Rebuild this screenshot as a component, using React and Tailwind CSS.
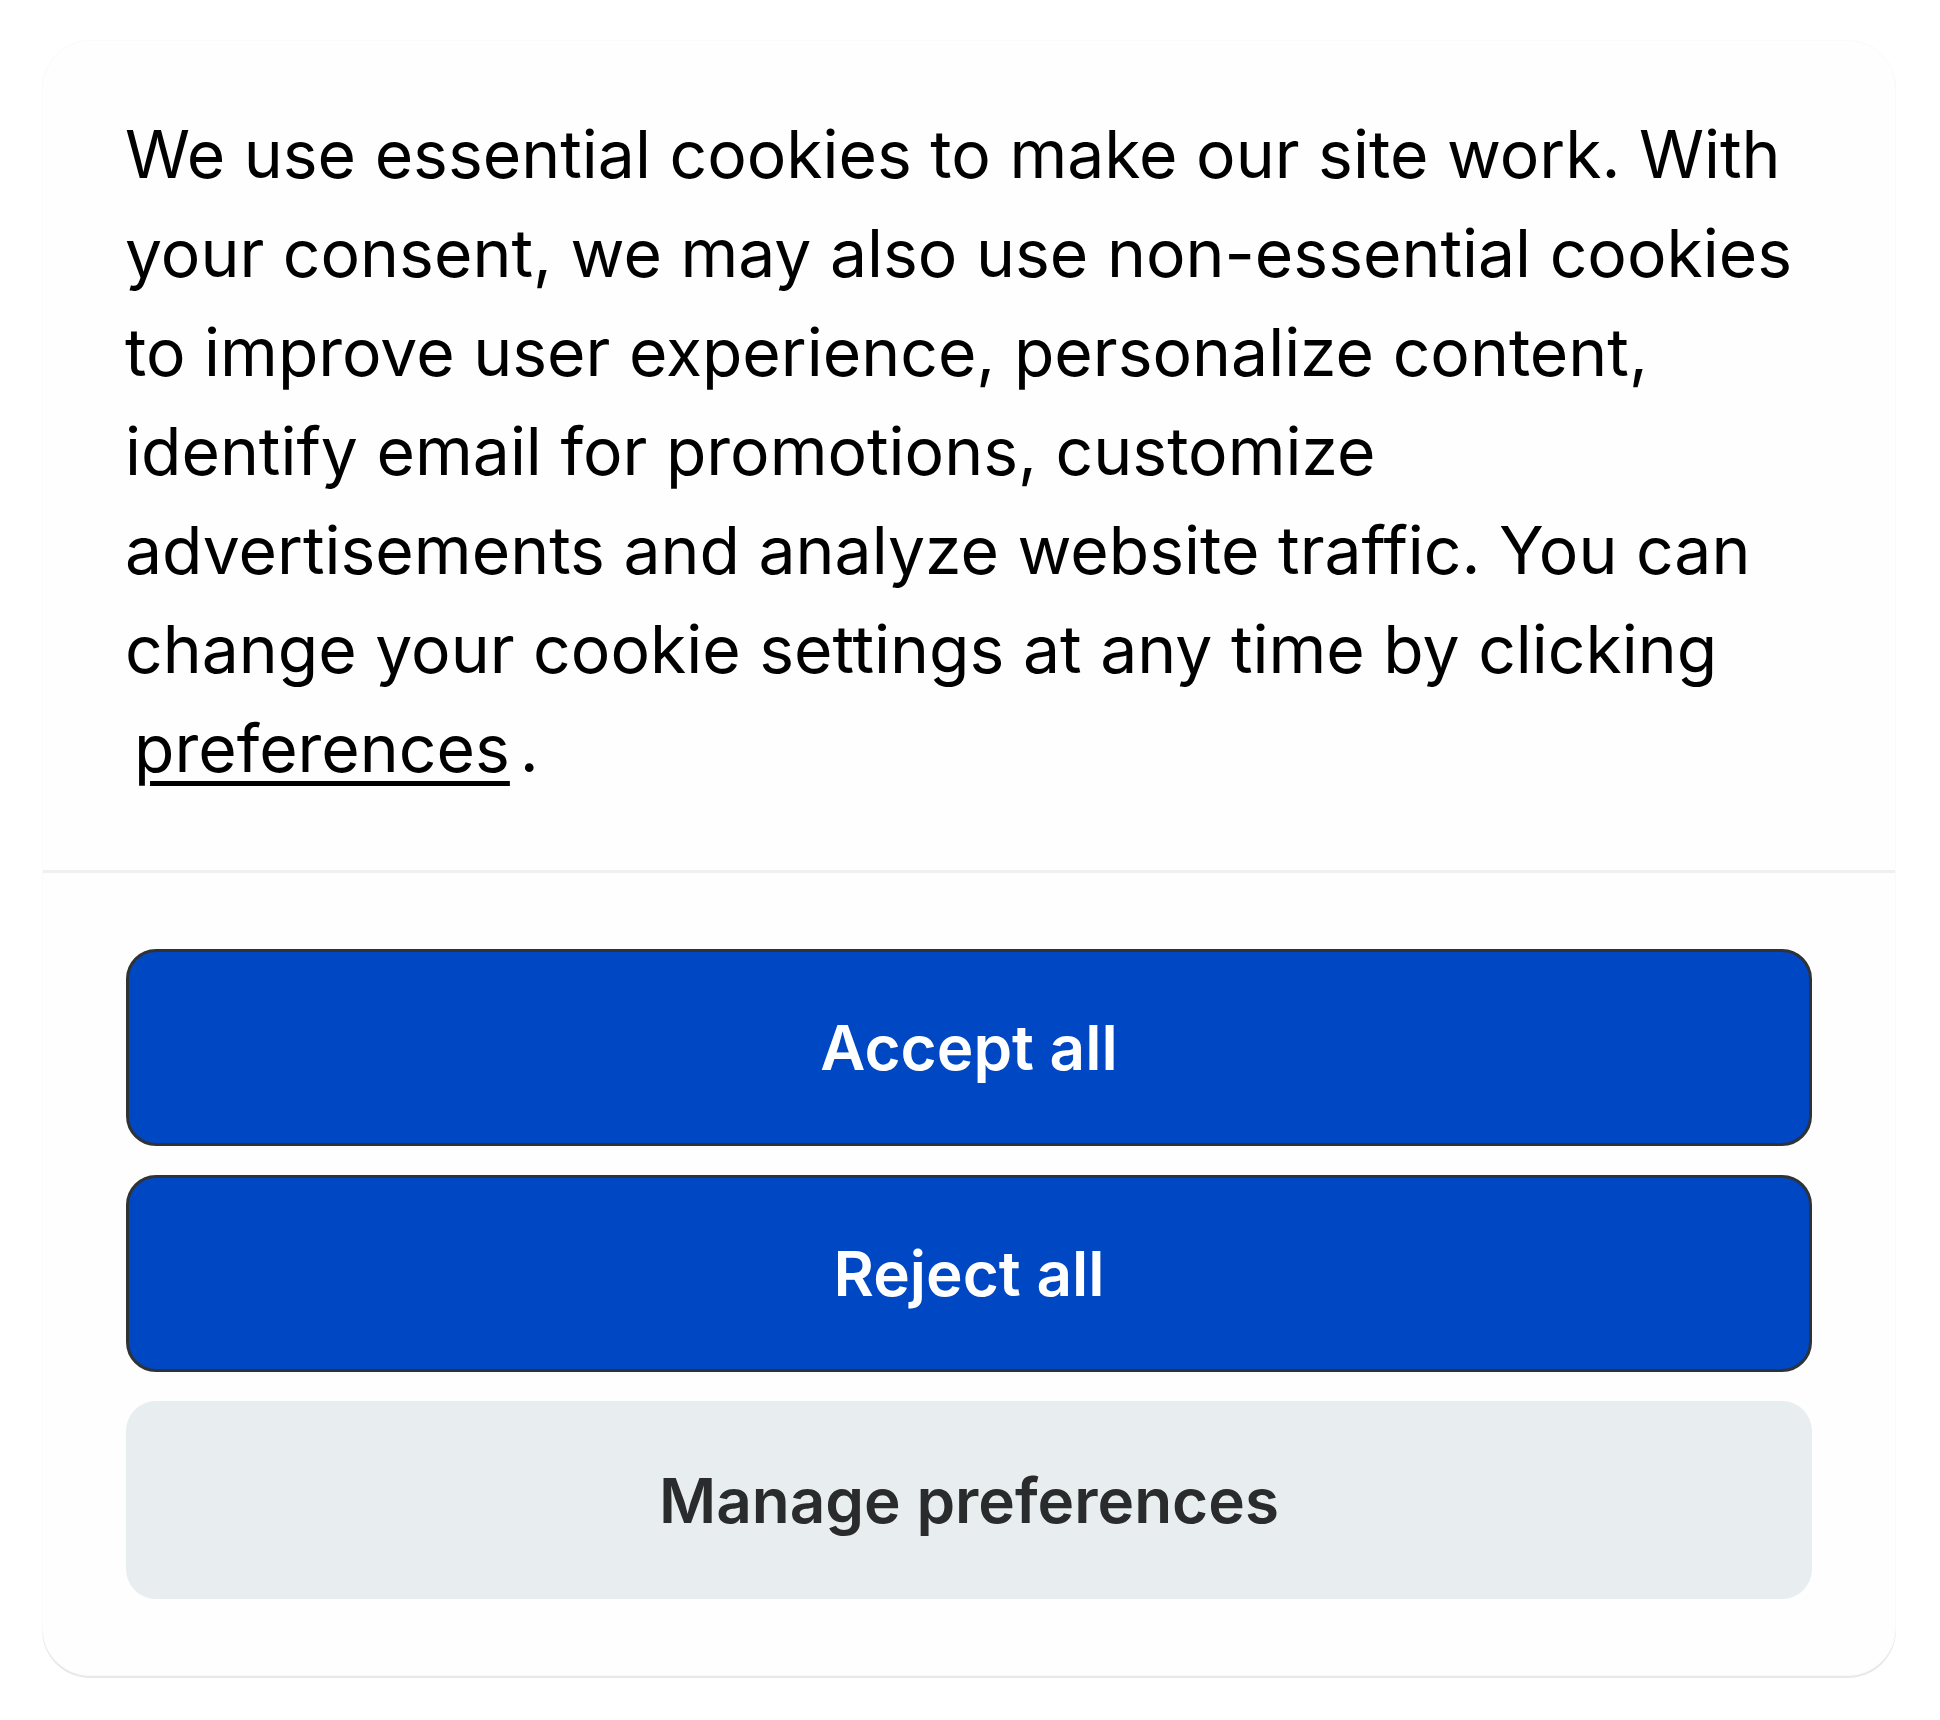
import React from 'react';

const buttons = [
  { label: 'Accept all', primary: true },
  { label: 'Reject all', primary: true },
  { label: 'Manage preferences', primary: false },
];

export default function App() {
  return (
    <div className="min-h-[1720px] bg-white pt-[40px] px-[42px] font-['Inter','Noto_Sans',sans-serif]">
      {/* Consent card */}
      <div className="w-[1854px] rounded-[48px] border border-[#fafafa] bg-[#fefefe] shadow-[0_2px_0_#e6e9ec]">
        <div className="pl-[82px] pr-[83px] pt-[64px] pb-[72px]">
          <p className="text-[66px] leading-[99px] text-black">
            We use essential cookies to make our site work. With your consent, we may also use
            non-essential cookies to improve user experience, personalize content, identify email
            for promotions, customize advertisements and analyze website traffic. You can change
            your cookie settings at any time by clicking{' '}
            <a
              href="#"
              className="ml-[9px] mr-[10px] underline [text-decoration-thickness:5px] [text-underline-offset:9px] text-black"
            >
              preferences
            </a>
            .
          </p>
        </div>

        <div className="h-[3px] bg-[#eef0f2]" />

        <div className="flex flex-col gap-[29px] px-[83px] pt-[76px] pb-[76px]">
          {buttons.map((b) => (
            <button
              key={b.label}
              className={
                b.primary
                  ? 'h-[197px] w-full rounded-[30px] border-[3px] border-[#2f3336] bg-[#0047c4] text-[62px] font-semibold text-white'
                  : 'h-[198px] w-full rounded-[30px] bg-[#e8edef] text-[62px] font-semibold text-[#2a2b2d]'
              }
            >
              {b.label}
            </button>
          ))}
        </div>
      </div>
    </div>
  );
}
